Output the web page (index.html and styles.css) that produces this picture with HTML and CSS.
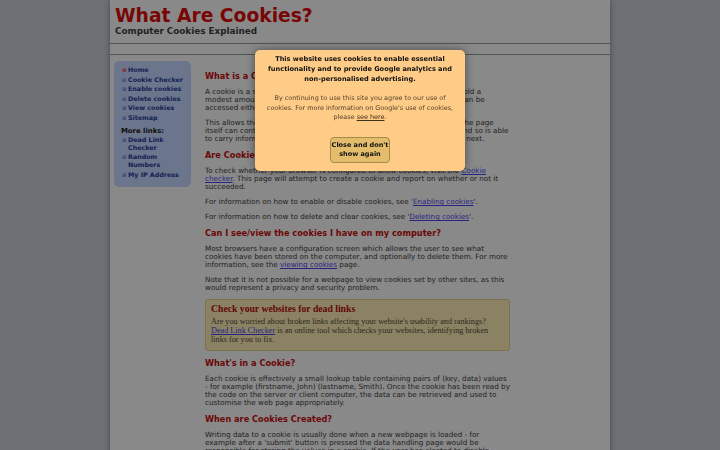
FILE: index.html
```html
<!DOCTYPE html>
<html lang="en">
<head>
<meta charset="utf-8">
<title>What Are Cookies?</title>
<link rel="stylesheet" href="styles.css">
</head>
<body>
<div class="page">
  <header class="masthead">
    <h1 class="site-title">What Are Cookies?</h1>
    <p class="site-sub">Computer Cookies Explained</p>
  </header>
  <div class="navbar"></div>
  <div class="layout">
    <nav class="sidebar">
      <ul class="menu">
        <li class="menu-item current"><span class="dot"></span><a href="#">Home</a></li>
        <li class="menu-item"><span class="dot"></span><a href="#">Cookie Checker</a></li>
        <li class="menu-item"><span class="dot"></span><a href="#">Enable cookies</a></li>
        <li class="menu-item"><span class="dot"></span><a href="#">Delete cookies</a></li>
        <li class="menu-item"><span class="dot"></span><a href="#">View cookies</a></li>
        <li class="menu-item"><span class="dot"></span><a href="#">Sitemap</a></li>
      </ul>
      <h3 class="more">More links:</h3>
      <ul class="menu">
        <li class="menu-item"><span class="dot"></span><a href="#">Dead Link Checker</a></li>
        <li class="menu-item"><span class="dot"></span><a href="#">Random Numbers</a></li>
        <li class="menu-item"><span class="dot"></span><a href="#">My IP Address</a></li>
      </ul>
    </nav>
    <main class="content">
      <h2 class="heading first">What is a Cookie?</h2>
      <p class="text">A cookie is a small file stored on your computer. They are designed to hold a modest amount of data specific to a particular client and website, and can be accessed either by the web server or the client computer.</p>
      <p class="text">This allows the server to deliver a page tailored to a particular user, or the page itself can contain some script which is aware of the data in the cookie and so is able to carry information from one visit to the website (or related site) to the next.</p>
      <h2 class="heading">Are Cookies Enabled?</h2>
      <p class="text">To check whether your browser is configured to allow cookies, visit the <a href="#">Cookie checker</a>. This page will attempt to create a cookie and report on whether or not it succeeded.</p>
      <p class="text">For information on how to enable or disable cookies, see '<a href="#">Enabling cookies</a>'.</p>
      <p class="text">For information on how to delete and clear cookies, see '<a href="#">Deleting cookies</a>'.</p>
      <h2 class="heading">Can I see/view the cookies I have on my computer?</h2>
      <p class="text">Most browsers have a configuration screen which allows the user to see what cookies have been stored on the computer, and optionally to delete them. For more information, see the <a href="#">viewing cookies</a> page.</p>
      <p class="text">Note that it is not possible for a webpage to view cookies set by other sites, as this would represent a privacy and security problem.</p>
      <aside class="promo">
        <h3 class="promo-title">Check your websites for dead links</h3>
        <p class="promo-text">Are you worried about broken links affecting your website's usability and rankings? <a href="#">Dead Link Checker</a> is an online tool which checks your websites, identifying broken links for you to fix.</p>
      </aside>
      <h2 class="heading">What's in a Cookie?</h2>
      <p class="text">Each cookie is effectively a small lookup table containing pairs of (key, data) values - for example (firstname, John) (lastname, Smith). Once the cookie has been read by the code on the server or client computer, the data can be retrieved and used to customise the web page appropriately.</p>
      <h2 class="heading">When are Cookies Created?</h2>
      <p class="text">Writing data to a cookie is usually done when a new webpage is loaded - for example after a 'submit' button is pressed the data handling page would be responsible for storing the values in a cookie. If the user has elected to disable cookies then the write operation will fail, and subsequent sites which rely on the cookie will either have to take a default action, or prompt the user to re-enter the information that would have been stored in the cookie.</p>
    </main>
  </div>
</div>
<div class="overlay"></div>
<div class="cookie-modal">
  <p class="modal-lead">This website uses cookies to enable essential<br>functionality and to provide Google analytics and<br>non-personalised advertising.</p>
  <p class="modal-note">By continuing to use this site you agree to our use of<br>cookies. For more information on Google's use of cookies,<br>please <a href="#">see here</a>.</p>
  <button class="modal-btn" type="button">Close and don't<br>show again</button>
</div>
</body>
</html>
```
FILE: styles.css
```css
html, body {
  margin: 0;
  padding: 0;
}
body {
  background: #b6b9c4;
  font-family: "DejaVu Sans", sans-serif;
  color: #383838;
}
.page {
  width: 500px;
  margin: 0 auto;
  min-height: 450px;
  background: #e4e4e4;
  box-shadow: 0 0 5px rgba(0, 0, 0, 0.35);
}
.masthead {
  padding: 6px 5px 6px;
  border-bottom: 1px solid #8a8a8a;
}
.site-title {
  margin: 0;
  font-size: 18.7px;
  line-height: 20px;
  font-weight: bold;
  color: #c80a0a;
}
.site-sub {
  margin: 0;
  font-size: 8.8px;
  line-height: 11px;
  font-weight: bold;
  color: #3a3a3a;
}
.navbar {
  height: 10px;
  border-bottom: 1px solid #8a8a8a;
}
.layout {
  display: flex;
  align-items: flex-start;
  padding: 6px 0 0 4px;
}
.sidebar {
  flex: none;
  width: 77px;
  box-sizing: border-box;
  padding: 5px 4px 6.5px 8px;
  background: #b2c4ea;
  border-radius: 5px;
}
.menu {
  list-style: none;
  margin: 0;
  padding: 0;
}
.menu-item {
  display: flex;
  align-items: flex-start;
  margin-bottom: 1.5px;
  font-size: 6.35px;
  line-height: 8px;
  font-weight: bold;
}
.menu-item a {
  color: #24388c;
  text-decoration: none;
}
.dot {
  flex: none;
  width: 4px;
  height: 4px;
  margin: 2px 2px 0 0;
  border-radius: 50%;
  background: radial-gradient(circle at 35% 35%, #9db2ea, #3f5cae);
}
.current .dot {
  background: radial-gradient(circle at 35% 35%, #f08aa0, #c01840);
}
.more {
  margin: 5px 0 0 -1px;
  font-size: 6.9px;
  line-height: 9px;
  font-weight: bold;
  color: #141414;
}
.content {
  flex: none;
  width: 305px;
  margin-left: 14px;
}
.heading {
  margin: 0 0 7px;
  font-size: 8.2px;
  line-height: 10px;
  font-weight: bold;
  color: #b40c0c;
}
.heading.first {
  margin-top: 10px;
}
.text {
  margin: 0 0 7px;
  font-size: 7.2px;
  line-height: 8px;
}
.text a {
  color: #3f3fd8;
}
.promo {
  margin: 0 0 7px;
  padding: 4px 5px 6px;
  background: #e6d9a5;
  border: 1px solid #cdbd7c;
  border-radius: 3px;
  font-family: "Liberation Serif", serif;
}
.promo-title {
  margin: 0 0 2.5px;
  font-size: 9.7px;
  line-height: 10px;
  font-weight: bold;
  color: #a80c0c;
}
.promo-text {
  margin: 0;
  font-size: 8.2px;
  line-height: 9px;
  color: #4e4234;
}
.promo-text a {
  color: #3f3fd8;
}
.overlay {
  position: fixed;
  inset: 0;
  background: rgba(0, 0, 0, 0.4);
}
.cookie-modal {
  position: fixed;
  left: 255px;
  top: 50px;
  width: 210px;
  box-sizing: border-box;
  padding: 5px 6px 8px;
  background: #ffcc88;
  border-radius: 5px;
  box-shadow: 0 0 10px rgba(0, 0, 0, 0.45);
  text-align: center;
}
.modal-lead {
  margin: 0 0 9.5px;
  font-size: 6.6px;
  line-height: 9.8px;
  font-weight: bold;
  color: #111;
}
.modal-note {
  margin: 0 0 14px;
  font-size: 6.45px;
  line-height: 9.7px;
  color: #56432b;
}
.modal-note a {
  color: #3e2e1a;
}
.modal-btn {
  display: block;
  width: 60px;
  height: 26px;
  margin: 0 auto;
  padding: 0;
  box-sizing: border-box;
  background: #e4bd6c;
  border: 1px solid #a68a4c;
  border-radius: 4px;
  font-family: "DejaVu Sans", sans-serif;
  font-size: 6.5px;
  line-height: 8.7px;
  font-weight: bold;
  color: #111;
}
```
